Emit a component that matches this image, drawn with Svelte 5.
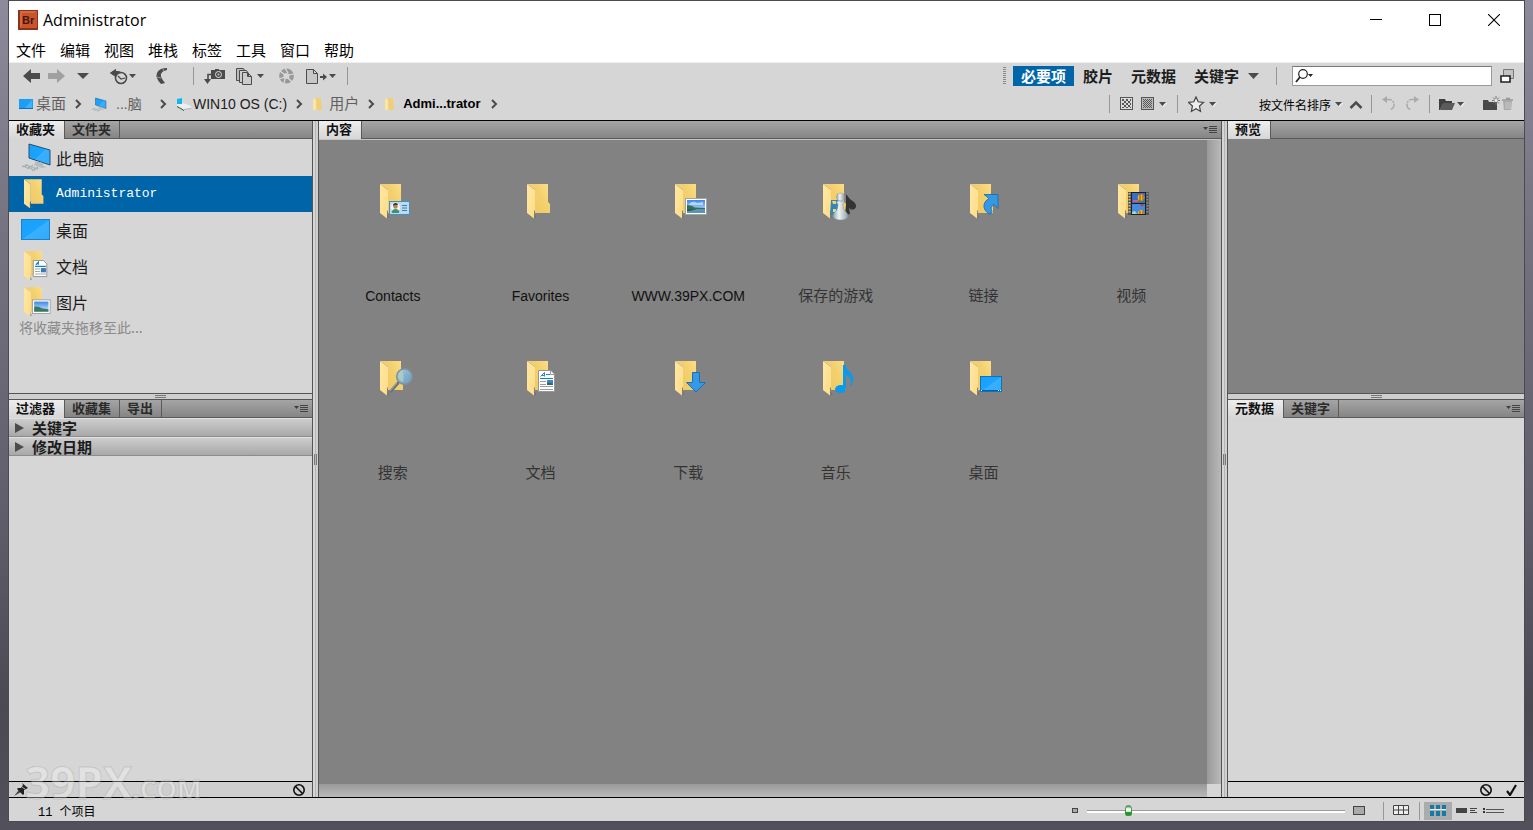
<script>
  const menus = ['文件', '编辑', '视图', '堆栈', '标签', '工具', '窗口', '帮助'];

  const crumbs = [
    { icon: 'desktop', label: '桌面', zh: true },
    { icon: 'pc', label: '...脑', zh: true, kind: 'short' },
    { icon: 'drive', label: 'WIN10 OS (C:)' },
    { icon: 'folder', label: '用户', zh: true },
    { icon: 'folder', label: 'Admi...trator', kind: 'current' }
  ];

  const places = [
    { icon: 'pc', label: '此电脑' },
    { icon: 'folder', label: 'Administrator', latin: true },
    { icon: 'desktop', label: '桌面' },
    { icon: 'document', label: '文档' },
    { icon: 'picture', label: '图片' }
  ];

  const items = [
    { kind: 'contacts', label: 'Contacts' },
    { kind: 'plain', label: 'Favorites' },
    { kind: 'picture', label: 'WWW.39PX.COM' },
    { kind: 'games', label: '保存的游戏', zh: true },
    { kind: 'link', label: '链接', zh: true },
    { kind: 'video', label: '视频', zh: true },
    { kind: 'search', label: '搜索', zh: true },
    { kind: 'document', label: '文档', zh: true },
    { kind: 'download', label: '下载', zh: true },
    { kind: 'music', label: '音乐', zh: true },
    { kind: 'desktop', label: '桌面', zh: true }
  ];

  const filters = ['关键字', '修改日期'];

  let selected = $state('Administrator');
  let workspace = $state('必要项');
  let size = $state(15);
  let query = $state('');
</script>

{#snippet folderBase()}
  <path d="M8 0h13v18l2 2v9H8z" fill="url(#backFill)" />
  <path d="M0 0l8 6v20l-1 1v7.500l-7-5.500z" fill="url(#frontFill)" />
  <path d="M0 0h9v6.500z" fill="#f2cf74" />
  <path d="M7.500 30v4.500l2-1z" fill="#6d6d6d" opacity=".6" />
{/snippet}

{#snippet folderIcon(kind)}
  <svg class="folder-icon" viewBox="0 0 36 37" width="36" height="37" aria-hidden="true">
    {@render folderBase()}
    {#if kind === 'contacts'}
      <rect x="9.500" y="17.500" width="20" height="13" fill="#b9dcf3" stroke="#4191be" />
      <circle cx="15.500" cy="23.500" r="4.600" fill="#f3f5f3" />
      <path d="M11.500 28q1-3 4-3t4 3l-1 1h-6z" fill="#3f9168" />
      <circle cx="15.500" cy="22.500" r="2.200" fill="#b98358" /><path d="M13 22q0-3 2.500-3t2.500 2l-3 0z" fill="#403223" />
      <path d="M22 21.500h5M22 24h5M22 26.500h5" stroke="#3b7ea8" />
    {:else if kind === 'picture'}
      <rect x="10.500" y="14.500" width="21" height="16" fill="#fff" stroke="#a2a2a2" />
      <rect x="12" y="16" width="18" height="13" fill="url(#skyFill)" />
      <path d="M14 20q4-4 8-1l6-1v3H14z" fill="#d4eaff" opacity=".7" />
      <path d="M12 21q5 0 8 2.500l10 .5v1H12z" fill="#347049" /><path d="M12 25h18v4H12z" fill="#5b93ba" /><path d="M12 25h10l-7 2h-3z" fill="#285d50" />
    {:else if kind === 'games'}
      <path d="M8 16h8v15H7z" fill="#3585b8" /><path d="M9 17h4v3h-3zM10 25h3v3h-3z" fill="#ead47c" />
      <path d="M23 10q3 5 8 8 4 4 .5 7-3 1.500-5.500-1l1 6-5 1 1-11z" fill="#343434" />
      <path d="M14.500 17h6l1 2-1.500 1q0 5 2 7 3 2 3 5-1 4-7.500 4T10 32q0-3 3-5 2-2 2-7l-1.500-1z" fill="url(#silverFill)" stroke="#84959c" stroke-width=".5" />
      <circle cx="17.500" cy="13" r="4" fill="url(#silverFill)" stroke="#84959c" stroke-width=".5" />
    {:else if kind === 'link'}
      <path d="M14 10.500h14v14l-4-4q-4.500 2.500-2 7l-2 3q-7-4-6-10 1-4 5-6z" fill="#3598e4" stroke="#1668a8" stroke-width=".8" />
    {:else if kind === 'video'}
      <rect x="10" y="8" width="21" height="23" fill="#555" /><path d="M11.500 9v21" stroke="#d9c078" stroke-dasharray="1.500 1.500" stroke-width="2" /><path d="M29.500 9v21" stroke="#8a8a8a" stroke-dasharray="1.500 1.500" stroke-width="2" />
      <rect x="13.500" y="8.500" width="14" height="11" fill="#386dca" stroke="#202020" /><rect x="13.500" y="19.500" width="14" height="11" fill="#4889dc" stroke="#202020" />
      <circle cx="23" cy="13.500" r="3.300" fill="#e1bd1e" /><path d="M22 10v7M25 11v5" stroke="#bb3429" /><path d="M15 16h6v2h-6z" fill="#d16074" /><path d="M20 17h7v1h-7z" fill="#329056" /><path d="M20 28q3-4 6 0v2h-6z" fill="#e1bd1e" /><path d="M22 27v3M25 27v3" stroke="#c43528" /><path d="M22 20h4l-2 3z" fill="#ca3a2a" /><path d="M14 28l3-1 2 3h-5z" fill="#9bdcd2" />
    {:else if kind === 'search'}
      <path d="M18 22l-7 8" stroke="#697278" stroke-width="3" stroke-linecap="round" /><path d="M17 22l-7 8" stroke="#a5afb4" />
      <circle cx="24.500" cy="15.500" r="7.800" fill="url(#lensFill)" stroke="#7f9098" stroke-width="1.500" /><path d="M18 16q0-5 5-7 1 7 0 12-4-1-5-5z" fill="#c2d6bf" opacity=".6" />
    {:else if kind === 'document'}
      <path d="M11.500 9.500h12l4 4v17h-16z" fill="#fff" stroke="#969696" /><path d="M23.500 9.500v4h4" fill="#fff" stroke="#969696" />
      <path d="M13.500 15.500l4-4v4m-3-1h3M19 13.500h4" stroke="#238fc5" fill="none" /><path d="M13 17.500h13" stroke="#0f82bd" />
      <path d="M13 20.500h6M13 23.500h6M13 25.500h13M13 28.500h13" stroke="#a0a0a0" /><path d="M20 19h6v5h-6z" fill="#4683c4" /><path d="M20 22q3-1 6 1v1h-6z" fill="#326b4b" />
    {:else if kind === 'download'}
      <path d="M17.500 11.500h7v10h6l-9.500 9.500-9.500-9.500h6z" fill="#3499e6" stroke="#1b70b4" />
    {:else if kind === 'music'}
      <path d="M20 4h3q0 4 4 7 6 6 1 14l-1-1q3-7-4-10v13q0 5-6 5-5-1-5-4 1-4 6-4h2z" fill="#0999ed" />
    {:else if kind === 'desktop'}
      <rect x="10.500" y="15.500" width="21" height="15" fill="url(#screenFill)" stroke="#0875bd" /><path d="M11 29.500h20" stroke="#065e9e" /><path d="M11 29.500h1M28 29.500h1M30 29.500h1" stroke="#fff" />
    {/if}
  </svg>
{/snippet}

{#snippet pcIcon()}
  <path d="M8 1l21 6v15L8 15z" fill="url(#screenFill)" stroke="#25506c" />
  <path d="M15 18l7 2v3l4 1-5 1-8-3z" fill="#b3bcc1" />
  <path d="M4 21l16 4-6 3L0 23z" fill="#c9ced1" /><path d="M1 23l13 4M4 22l13 4M7 21.500l-5 3M12 22l-6 4M17 24l-6 4" stroke="#98a3a8" stroke-dasharray="2 1" />
{/snippet}

{#snippet smallIcon(kind)}
  {#if kind === 'desktop'}
    <svg width="16" height="16" viewBox="0 0 16 16" aria-hidden="true"><rect x="0" y="3" width="14" height="10" fill="#1a9ff5" /><path d="M6 12l7-8v8z" fill="#3fb1ff" /><path d="M0 12.500h14" stroke="#0b6fb1" /></svg>
  {:else if kind === 'pc'}
    <svg width="16" height="16" viewBox="-1 -3 32 32" aria-hidden="true">{@render pcIcon()}</svg>
  {:else if kind === 'drive'}
    <svg width="16" height="16" viewBox="0 0 16 16" aria-hidden="true"><path d="M1 8l6-1 8 3v3l-7 1-7-4z" fill="#eceeef" /><path d="M1 3l5-1v6H1z" fill="#12b6ee" /><path d="M1 10l7 4v1l-7-4z" fill="#444" /><path d="M8 14l7-1v-1l-7 1z" fill="#aaa" /><path d="M4 12l2 1" stroke="#29bd4f" /></svg>
  {:else}
    <svg width="16" height="16" viewBox="0 0 16 16" aria-hidden="true"><path d="M4 2h5v7l1 1v4H5z" fill="#f3cf70" /><path d="M1 2l3 2v9l-1 2-2-2z" fill="#ffe69d" /></svg>
  {/if}
{/snippet}

{#snippet caret()}
  <svg width="8" height="6" viewBox="0 0 8 6" aria-hidden="true"><path d="M1 2h7l-3.500 4z" fill="#fff" opacity=".7" /><path d="M0 1h7L3.500 5z" fill="#4b4b4b" /></svg>
{/snippet}

{#snippet panelMenu()}
  <button class="panel-menu" aria-label="面板菜单">
    <svg width="16" height="9" viewBox="0 0 16 9" aria-hidden="true"><path d="M1 2h5L3.500 5z" fill="#3d3d3d" /><path d="M7 1.500h8M7 3.500h8M7 5.500h8M7 7.500h8" stroke="#444" /></svg>
  </button>
{/snippet}

{#snippet forbidden()}
  <svg width="14" height="14" viewBox="0 0 14 14" aria-hidden="true"><circle cx="7" cy="7" r="5.200" fill="none" stroke="#111" stroke-width="1.600" /><path d="M3.500 3.500l7 7" stroke="#111" stroke-width="1.600" /></svg>
{/snippet}

<svg class="defs" width="0" height="0" aria-hidden="true">
  <defs>
    <linearGradient id="backFill" x1="0" y1="1" x2="1" y2="0"><stop offset="0" stop-color="#f0c968" /><stop offset=".5" stop-color="#f3d06e" /><stop offset="1" stop-color="#ffe089" /></linearGradient>
    <linearGradient id="frontFill" x1="0" y1="0" x2="1" y2="1"><stop offset="0" stop-color="#ffe8a5" /><stop offset="1" stop-color="#ffdc84" /></linearGradient>
    <linearGradient id="skyFill" x1="0" y1="0" x2="0" y2="1"><stop offset="0" stop-color="#3f87e6" /><stop offset="1" stop-color="#d6efff" /></linearGradient>
    <linearGradient id="silverFill"><stop offset="0" stop-color="#91a5ab" /><stop offset=".4" stop-color="#edf3f4" /><stop offset="1" stop-color="#8ea0a6" /></linearGradient>
    <linearGradient id="lensFill" x1="0" y1="0" x2="1" y2="1"><stop offset="0" stop-color="#a5c8dc" /><stop offset="1" stop-color="#669ac4" /></linearGradient>
    <linearGradient id="screenFill" x1="0" y1="0" x2="1" y2="1"><stop offset="0" stop-color="#18a0fb" /><stop offset=".5" stop-color="#1ba4ff" /><stop offset=".52" stop-color="#38afff" /><stop offset="1" stop-color="#35a9fa" /></linearGradient>
    <pattern id="checks" width="4" height="4" patternUnits="userSpaceOnUse"><path d="M0 0h2v2H0zM2 2h2v2H2z" fill="#555" /></pattern>
    <pattern id="dither" width="2" height="2" patternUnits="userSpaceOnUse"><path d="M0 0h1v1H0zM1 1h1v1H1z" fill="#555" /></pattern>
  </defs>
</svg>

<div class="backdrop">
  <div class="window">
    <header class="title">
      <svg width="20" height="20" viewBox="0 0 20 20" aria-hidden="true"><rect width="20" height="20" fill="#8b321a" /><rect x="2" y="1" width="17" height="17" fill="#c9532b" /><path d="M2 1h17l-3 2H4v13l-2 2z" fill="#d9683c" /><text x="4" y="14" font-size="11" font-weight="bold" fill="#43180c">Br</text></svg>
      <h1>Administrator</h1>
      <div class="controls">
        <button aria-label="最小化"><svg width="12" height="12" viewBox="0 0 12 12"><path d="M0 5.500h12" stroke="#000" /></svg></button>
        <button aria-label="最大化"><svg width="12" height="12" viewBox="0 0 12 12"><rect x=".5" y=".5" width="11" height="11" fill="none" stroke="#000" /></svg></button>
        <button aria-label="关闭"><svg width="12" height="12" viewBox="0 0 12 12"><path d="M0 0l12 12M12 0L0 12" stroke="#000" stroke-width="1.100" /></svg></button>
      </div>
    </header>

    <nav class="menu">
      {#each menus as name}<button>{name}</button>{/each}
    </nav>

    <div class="toolbars">
      <div class="bar">
        <button aria-label="后退"><svg width="25" height="20" viewBox="0 0 25 20"><path d="M4 10l8-7v4h9v6h-9v4z" fill="#4b4b4b" /></svg></button>
        <button aria-label="前进"><svg width="25" height="20" viewBox="0 0 25 20"><path d="M21 10l-8-7v4H4v6h9v4z" fill="#a0a0a0" /></svg></button>
        <button aria-label="转到父文件夹或收藏夹"><svg width="33" height="20" viewBox="0 0 33 20"><path d="M8 7h12l-6 6z" fill="#4b4b4b" /></svg></button>
        <button aria-label="显示最近使用的文件"><svg width="42" height="20" viewBox="0 0 42 20"><path d="M8 7l6-4v2q6 0 8 4l-3-1q-2-1-5 0v3z" fill="#4b4b4b" /><circle cx="19" cy="12" r="5.500" fill="#d6d6d6" stroke="#4b4b4b" stroke-width="1.600" /><path d="M16 10l3 3 4-1" fill="none" stroke="#4b4b4b" stroke-width="1.200" /><path d="M8 7l6-4v2q4 0 6 2l-6 1v3z" fill="#4b4b4b" /><path d="M27 8h7l-3.500 4z" fill="#4b4b4b" /></svg></button>
        <button aria-label="返回 Photoshop"><svg width="49" height="20" viewBox="0 0 49 20"><path d="M23 2q-8 0-10 5-2 5 4 11l4-1q-5-6-4-9 1-3 6-4z" fill="#4b4b4b" /><path d="M13 11l4 1M19 2.500l1 3" stroke="#bbb" stroke-width=".7" /></svg></button>
        <span class="sep"></span>
        <button aria-label="从相机获取照片"><svg width="37" height="20" viewBox="0 0 37 20"><path d="M17 4h4V3h4v1h6v9H17z" fill="#4b4b4b" /><circle cx="24.500" cy="8.500" r="3" fill="#4b4b4b" stroke="#e0e0e0" /><circle cx="24.500" cy="8.500" r="1" fill="#ccc" /><path d="M17 8.500h-3v5" fill="none" stroke="#4b4b4b" stroke-width="1.600" /><path d="M10 13h7l-3.500 5z" fill="#4b4b4b" /></svg></button>
        <button aria-label="优化"><svg width="39" height="20" viewBox="0 0 39 20"><path d="M5.500 2.500h7l2 3v9h-9z" fill="#bbb" stroke="#4b4b4b" /><path d="M8.500 4.500h7l2 3v9h-9z" fill="#ccc" stroke="#4b4b4b" /><path d="M11.500 6.500h5l4 4v8h-9zM16.500 6.500v4h4" fill="#ccc" stroke="#4b4b4b" /><path d="M26 8h7l-3.500 4z" fill="#4b4b4b" /></svg></button>
        <button aria-label="在 Camera Raw 中打开"><svg width="30" height="20" viewBox="0 0 30 20"><circle cx="16.500" cy="10" r="5.200" fill="none" stroke="#999" stroke-width="4.400" /><path d="M15 2l3 5M24 8l-6 1M22 16l-4-4M14 18l1-6M9 13l6-2M10 5l5 4" stroke="#ddd" stroke-width="1.200" /></svg></button>
        <button aria-label="输出"><svg width="47" height="20" viewBox="0 0 47 20"><path d="M6.500 3.500h7l4 4v10h-11zM13.500 3.500v4h4" fill="#c7c7c7" stroke="#4b4b4b" /><path d="M20 11h3" stroke="#4b4b4b" stroke-width="2" /><path d="M23 7.500v7l4-3.500z" fill="#4b4b4b" /><path d="M29 8h7l-3.500 4z" fill="#4b4b4b" /></svg></button>
        <span class="sep"></span>

        <div class="right workspaces">
          <span class="grip"></span>
          {#each ['必要项', '胶片', '元数据', '关键字'] as name}
            <button class="space" class:on={workspace === name} onclick={() => (workspace = name)}>{name}</button>
          {/each}
          <button class="more" aria-label="更多工作区"><svg width="12" height="8" viewBox="0 0 12 8"><path d="M0 1h11L5.500 7z" fill="#4b4b4b" /></svg></button>
          <span class="sep"></span>
          <label class="search">
            <svg width="20" height="16" viewBox="0 0 20 16" aria-hidden="true"><circle cx="8" cy="6" r="4.300" fill="none" stroke="#222" stroke-width="1.200" /><path d="M5 9l-4 5" stroke="#222" stroke-width="1.800" /><path d="M13 6h5l-2.500 3z" fill="#222" /></svg>
            <input type="text" bind:value={query} aria-label="搜索" />
          </label>
          <button aria-label="切换到紧凑模式"><svg width="16" height="16" viewBox="0 0 16 16"><path d="M3.500 1.500h10v9h-10z" fill="#c2c2c2" stroke="#777" /><path d="M1 8h9v6H1z" fill="#fff" stroke="#222" stroke-width="1.600" /></svg></button>
        </div>
      </div>

      <div class="bar second">
        <nav class="crumbs">
          {#each crumbs as crumb}
            <button class={['crumb', crumb.kind, crumb.zh && 'zh']}>{@render smallIcon(crumb.icon)}<span>{crumb.label}</span></button>
            <svg width="7" height="10" viewBox="0 0 7 10" aria-hidden="true"><path d="M1 1l4 4-4 4" fill="none" stroke="#4b4b4b" stroke-width="2" /></svg>
          {/each}
        </nav>
        <div class="right options">
          <span class="sep"></span>
          <div class="set">
            <button aria-label="缩览图选项"><svg width="14" height="14" viewBox="0 0 14 14"><rect x=".5" y=".5" width="12" height="12" fill="#ddd" stroke="#555" /><path d="M2 2h9v9H2z" fill="url(#checks)" /></svg></button>
            <button class="pair" aria-label="缩览图品质"><svg width="14" height="14" viewBox="0 0 14 14"><rect x=".5" y=".5" width="12" height="12" fill="#bbb" stroke="#555" /><path d="M2 2h9v9H2z" fill="url(#dither)" /></svg>{@render caret()}</button>
          </div>
          <span class="sep"></span>
          <button class="pair star" aria-label="按评级筛选"><svg width="17" height="17" viewBox="0 0 17 17"><path d="M8 1l2.200 4.800 5.300.6-4 3.600 1 5.400L8 12.800l-4.600 2.600 1-5.400-3.900-3.600 5.300-.6z" fill="#eee" stroke="#444" stroke-width="1.200" /></svg>{@render caret()}</button>
          <button class="sort">按文件名排序{@render caret()}</button>
          <button class="order" aria-label="升序"><svg width="14" height="9" viewBox="0 0 14 9"><path d="M1.500 8L7 2.500 12.500 8" fill="none" stroke="#4b4b4b" stroke-width="2.500" /></svg></button>
          <span class="sep"></span>
          <div class="set turns">
            <button aria-label="逆时针旋转"><svg width="14" height="16" viewBox="0 0 14 16"><path d="M3 3.500h4a4.500 5 0 0 1 1 10" fill="none" stroke="#aaa" stroke-width="1.500" stroke-dasharray="7 1 2 1" /><path d="M5 0v7L0 3.500z" fill="#aaa" /></svg></button>
            <button aria-label="顺时针旋转"><svg width="14" height="16" viewBox="0 0 14 16"><path d="M11 3.500H7a4.500 5 0 0 0-1 10" fill="none" stroke="#aaa" stroke-width="1.500" stroke-dasharray="7 1 2 1" /><path d="M9 0v7l5-3.500z" fill="#aaa" /></svg></button>
          </div>
          <span class="sep"></span>
          <button class="pair open" aria-label="打开最近使用的文件"><svg width="17" height="14" viewBox="0 0 17 14"><path d="M0 2h6l1 2h6v3H4l-3 6H0z" fill="#3f3f3f" /><path d="M4 6h12l-3 7H1z" fill="#5b5b5b" /></svg>{@render caret()}</button>
          <button class="create" aria-label="创建新文件夹"><svg width="18" height="16" viewBox="0 0 18 16"><path d="M1 4h5l1 2h8v8H1z" fill="#484848" /><path d="M14 0v9M10 4.500h8M11 1.500l6 6M17 1.500l-6 6" stroke="#777" /><circle cx="14" cy="4.500" r="1.500" fill="#eee" /></svg></button>
          <button aria-label="删除项目"><svg width="12" height="14" viewBox="0 0 12 14"><path d="M1 4h9l-1 9H2z" fill="#aaa" /><path d="M0 3h11M4 1.500h4" stroke="#999" stroke-width="1.600" /><path d="M4 5v7M6 5v7M8 5v7" stroke="#c9c9c9" /></svg></button>
        </div>
      </div>
    </div>

    <main>
      <aside class="column left">
        <section class="upper">
          <div class="tabs"><button class="active">收藏夹</button><button>文件夹</button></div>
          <div class="body">
            <ul class="places">
              {#each places as place}
                <li>
                  <button class:selected={selected === place.label} class:latin={place.latin} onclick={() => (selected = place.label)}>
                    <span class="place-icon">
                      {#if place.icon === 'pc'}
                        <svg width="31" height="30" viewBox="0 0 31 30" aria-hidden="true">{@render pcIcon()}</svg>
                      {:else if place.icon === 'desktop'}
                        <svg width="31" height="22" viewBox="0 0 31 22" aria-hidden="true"><rect x=".5" y=".5" width="28" height="20" fill="url(#screenFill)" stroke="#1683cc" /></svg>
                      {:else}
                        <svg width="27" height="30" viewBox="0 0 32 35" class="scaled" aria-hidden="true">
                          {@render folderBase()}
                          {#if place.icon === 'document'}
                            <path d="M11 11h12l4 4v15H11z" fill="#fff" stroke="#888" /><path d="M14 16l3-3v3M13 18h13" stroke="#1387c4" fill="none" stroke-width="1.500" /><path d="M13 21h6M13 24h6M13 27h13" stroke="#999" /><path d="M20 20h6v5h-6z" fill="#3c78b8" />
                          {:else if place.icon === 'picture'}
                            <rect x="10" y="15" width="21" height="16" fill="#fff" stroke="#999" /><path d="M12 17h17v12H12z" fill="url(#skyFill)" /><path d="M12 23q6-1 9 2l8 1v3H12z" fill="#397b62" />
                          {/if}
                        </svg>
                      {/if}
                    </span>
                    {place.label}
                  </button>
                </li>
              {/each}
            </ul>
            <p class="hint">将收藏夹拖移至此...</p>
          </div>
        </section>
        <div class="split-h"></div>
        <section class="lower">
          <div class="tabs"><button class="active">过滤器</button><button>收藏集</button><button>导出</button>{@render panelMenu()}</div>
          <div class="body">
            {#each filters as name}
              <button class="filter"><svg width="10" height="10" viewBox="0 0 10 10" aria-hidden="true"><path d="M0 0l9 5-9 5z" fill="#4b4b4b" /></svg>{name}</button>
            {/each}
          </div>
          <div class="foot">
            <button aria-label="浏览时保持过滤器"><svg width="15" height="15" viewBox="0 0 15 15"><path d="M0 14l5-6 2 2z" fill="#444" /><path d="M8 1l6 5-2 1-2 1v4l-1 1-6-6 1-1h3l2-3z" fill="#222" /><path d="M8 5l3 2" stroke="#aaa" /></svg></button>
            <button class="end" aria-label="清除过滤器">{@render forbidden()}</button>
          </div>
        </section>
      </aside>

      <div class="split-v"></div>

      <section class="column content">
        <div class="tabs"><button class="active">内容</button>{@render panelMenu()}</div>
        <div class="viewport">
          <ul class="grid">
            {#each items as item}
              <li><button>{@render folderIcon(item.kind)}<span class:zh={item.zh}>{item.label}</span></button></li>
            {/each}
          </ul>
          <div class="scroll-y"></div>
          <div class="scroll-x"></div>
          <div class="corner"></div>
        </div>
      </section>

      <div class="split-v"></div>

      <aside class="column side">
        <section class="upper preview">
          <div class="tabs"><button class="active">预览</button></div>
          <div class="body"></div>
        </section>
        <div class="split-h"></div>
        <section class="lower">
          <div class="tabs"><button class="active">元数据</button><button>关键字</button>{@render panelMenu()}</div>
          <div class="body"></div>
          <div class="foot">
            <button class="end" aria-label="取消">{@render forbidden()}</button>
            <button aria-label="应用"><svg width="12" height="12" viewBox="0 0 12 12"><path d="M1 7l3 4 6-10" fill="none" stroke="#111" stroke-width="2.200" /></svg></button>
          </div>
        </section>
      </aside>
    </main>

    <footer class="status">
      <span class="count">11 个项目</span>
      <button aria-label="较小的缩览图"><svg width="7" height="7" viewBox="0 0 7 7"><rect x=".5" y="1.500" width="5" height="4" fill="#aaa" stroke="#444" /></svg></button>
      <input type="range" min="0" max="100" bind:value={size} aria-label="缩览图大小" />
      <button aria-label="较大的缩览图"><svg width="12" height="10" viewBox="0 0 12 10"><rect x=".5" y=".5" width="11" height="8" fill="#aaa" stroke="#444" /></svg></button>
      <span class="sep first"></span>
      <button aria-label="锁定缩览图网格"><svg width="16" height="11" viewBox="0 0 16 11"><path d="M.5.500h15v9H.500zM.500 5h15M5.500.500v9M10.500.500v9" fill="#eee" stroke="#444" /></svg></button>
      <span class="sep"></span>
      <div class="views">
        <button class="on" aria-label="以缩览图形式查看"><svg width="16" height="11" viewBox="0 0 16 11"><path d="M0 0h4v4H0zM6 0h4v4H6zM12 0h4v4h-4zM0 6h4v5H0zM6 6h4v5H6zM12 6h4v5h-4z" fill="#147aa9" /><path d="M0 4.500h16" stroke="#eee" /></svg></button>
        <button aria-label="以详细信息形式查看"><svg width="21" height="8" viewBox="0 0 21 8"><path d="M0 1h11v5H0z" fill="#444" /><path d="M14 1.500h7M14 3.500h5M14 5.500h7" stroke="#444" /></svg></button>
        <button aria-label="以列表形式查看"><svg width="22" height="8" viewBox="0 0 22 8"><path d="M0 2h2M0 5h2" stroke="#333" stroke-width="2" /><path d="M3 2.500h18M3 5.500h18" stroke="#555" /></svg></button>
      </div>
    </footer>
    <div class="watermark">39PX<small>.COM</small></div>
  </div>
</div>

<style>
  :global(body) { margin: 0; }
  * { box-sizing: border-box; }
  svg { display: block; flex: none; }
  .defs { position: absolute; }
  button { font: inherit; color: inherit; background: none; border: 0; padding: 0; display: flex; align-items: center; flex: none; }
  ul { list-style: none; margin: 0; padding: 0; }

  .backdrop {
    min-height: 100vh; display: flex; padding: 0 8px 8px;
    background: linear-gradient(#8d8a9b, #74717e 30%, #615f6b 60%, #4b4a53 85%, #52505a);
    font-family: "Liberation Sans", "Noto Sans CJK SC", sans-serif; color: #1c1c1c;
  }
  .window {
    flex: 1; min-width: 0; display: flex; flex-direction: column; position: relative;
    border: 1px solid #4b4a52; background: #d6d6d6;
  }
  .title { height: 38px; display: flex; align-items: center; background: #fff; padding: 0 24px 1px 9px; gap: 5px; }
  .title h1 { font: 16px/20px "Open Sans", sans-serif; color: #000; margin: 0; }
  .controls { display: flex; gap: 47px; margin-left: auto; }
  .menu { height: 23px; display: flex; background: #fff; padding-bottom: 2px; font: 15px/21px "Noto Sans CJK SC", sans-serif; color: #000; }
  .menu button { padding: 0 7px; }

  .toolbars { border-top: 1px solid #eee; border-bottom: 1px solid #000; }
  .bar { height: 28px; display: flex; align-items: center; padding: 0 8px 2px 10px; }
  .bar.second { height: 29px; padding-right: 10px; padding-bottom: 3px; }
  .sep { width: 1px; height: 18px; background: #979797; flex: none; }
  .right { margin-left: auto; display: flex; align-items: center; }
  .grip { width: 3px; height: 18px; margin-right: 7px; background: repeating-linear-gradient(#8a8a8a 0 1px, #d6d6d6 1px 2px); }
  .workspaces { font: bold 15px/20px "Noto Sans CJK SC", sans-serif; }
  .space { padding: 0 9px 1px; height: 20px; }
  .space.on { background: #0064a8; color: #fff; padding: 0 8px 1px; }
  .more { margin-right: 16px; }
  .search { width: 200px; height: 20px; margin: 0 8px 0 15px; display: flex; align-items: center; background: #fff; border: 1px solid #999; border-top-color: #777; padding-left: 2px; }
  .search input { flex: 1; min-width: 0; border: 0; outline: 0; background: none; font-size: 12px; }

  .crumbs { display: flex; align-items: center; gap: 9px; font-size: 14px; line-height: 20px; }
  .crumb { gap: 1px; }
  .crumb.zh { font-size: 15px; color: #606060; }
  .crumb.short { min-width: 60px; gap: 9px; font-size: 14px; }
  .crumb.current { font-weight: bold; font-size: 13px; color: #000; gap: 3px; padding-right: 2px; }
  .set { display: flex; align-items: center; gap: 7px; padding: 0 10px; }
  .set.turns { gap: 9px; }
  .pair { gap: 4px; }
  .star { margin: 0 42px 0 10px; }
  .sort { font-size: 12px; gap: 4px; color: #000; }
  .order { margin: 0 8px 0 6px; }
  .open { margin: 0 17px 0 9px; gap: 1px; }
  .create { margin-right: 2px; }

  main { flex: 1; min-height: 0; display: flex; }
  .column { display: flex; flex-direction: column; min-width: 0; }
  .left { flex: 0 0 304px; border-right: 1px solid #555; }
  .side { flex: 0 0 297px; border-left: 1px solid #555; }
  .content { flex: 1; border: solid #555; border-width: 0 1px; background: #828282; }
  .upper { flex: 0 0 272px; display: flex; flex-direction: column; }
  .lower { flex: 1; display: flex; flex-direction: column; }
  .body { flex: 1; }
  .preview .body { background: #828282; }
  .split-v { width: 5px; flex: none; background: linear-gradient(90deg, #d6d6d6 0 2px, #b5b5b5 2px 3px, #d0d0d0 3px); display: flex; align-items: center; justify-content: center; }
  .split-v::after { content: ""; width: 1px; height: 11px; border: solid #777; border-width: 0 1px; }
  .split-h { height: 7px; border: solid #555; border-width: 1px 0; background: #cecece; display: flex; align-items: center; justify-content: center; flex: none; }
  .split-h::after { content: ""; width: 11px; height: 1px; border: solid #777; border-width: 1px 0; }
  .tabs { height: 18px; display: flex; flex: none; border-bottom: 1px solid #5a5a5a; background: linear-gradient(#a5a5a5, #858585); font: bold 13px/16px "Noto Sans CJK SC", sans-serif; }
  .tabs button { padding: 0 8px 1px 7px; border-right: 1px solid #5a5a5a; color: #2a2a2a; }
  .tabs button.active { background: linear-gradient(#eee, #d6d6d6); margin-bottom: -1px; padding: 0 9px 2px 7px; color: #111; }
  .tabs button.panel-menu { margin-left: auto; border: 0; padding: 0 3px 0 0; }

  .places { padding-top: 1px; }
  .places button { width: 100%; height: 36px; padding: 0 0 1px 12px; font: 16px/24px "Noto Sans CJK SC", sans-serif; }
  .place-icon { width: 35px; display: flex; }
  .scaled { margin-left: 3px; }
  .places button.selected { background: #0064a8; color: #fff; }
  .places button.latin { font: 13px/24px "Liberation Mono", monospace; }
  .hint { margin: 0; padding-left: 10px; font: 14px/14px "Noto Sans CJK SC", sans-serif; color: #8b8b8b; }
  .filter { width: 100%; height: 19px; gap: 7px; padding-left: 6px; background: linear-gradient(#cdcdcd, #a8a8a8); border-top: 1px solid #e0e0e0; border-bottom: 1px solid #8c8c8c; font: bold 15px/17px "Noto Sans CJK SC", sans-serif; }
  .foot { height: 16px; display: flex; align-items: center; flex: none; gap: 13px; border-top: 1px solid #000; padding: 0 6px 0 5px; background: #cfcfcf; }
  .foot .end { margin-left: auto; }
  .side .foot { background: #d6d6d6; }

  .viewport { flex: 1; display: grid; grid-template: 1fr 13px / 1fr 14px; border-top: 1px solid #c4c4c4; }
  .grid { display: grid; grid-template-columns: repeat(auto-fill, minmax(146px, 1fr)); grid-auto-rows: 177px; padding: 44px 2px 0 0; }
  .grid button { width: 100%; flex-direction: column; gap: 65px; font-size: 14px; line-height: 20px; color: #111; }
  .grid span.zh { font-size: 15px; color: #333; }
  .folder-icon { margin-left: 10px; }
  .scroll-y { background: linear-gradient(90deg, #999, #b9b9b9); }
  .scroll-x { background: linear-gradient(#999, #b9b9b9); }
  .corner { background: #d6d6d6; }

  .status { height: 24px; border-top: 1px solid #000; display: flex; align-items: center; padding: 2px 19px 0 0; font-size: 12px; color: #000; flex: none; }
  .count { padding-left: 29px; margin-right: auto; font-family: "Liberation Mono", "Noto Sans CJK SC", monospace; }
  .status input { appearance: none; width: 258px; height: 14px; margin: 0 8px; background: linear-gradient(#999, #999) 0 6px / 100% 1px no-repeat, linear-gradient(#fff, #fff) 0 7px / 100% 2px no-repeat; }
  .status input::-webkit-slider-thumb { appearance: none; width: 7px; height: 11px; background: linear-gradient(#3d9f45, #fff 35%, #e8f5e8 60%, #18a020 70%); border: 1px solid #4a8a4e; border-radius: 4px 4px 2px 2px; }
  .status .sep { margin: 0 4px 0 10px; }
  .status .sep.first { margin: 0 9px 0 18px; }
  .views { display: flex; align-items: center; gap: 6px; }
  .views button.on { background: #ababab; padding: 3px 6px 4px; margin-right: -2px; }

  .watermark { position: absolute; left: 16px; bottom: 15px; pointer-events: none; font: bold 44px/34px "Open Sans", sans-serif; color: #ffffff50; -webkit-text-stroke: 1px #99999955; }
  .watermark small { font-size: 26px; }
</style>
